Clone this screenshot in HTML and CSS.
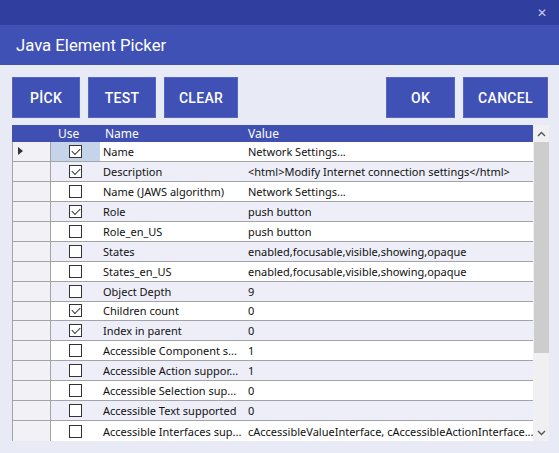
FILE: index.html
```html
<!DOCTYPE html>
<html>
<head>
<meta charset="utf-8">
<link rel="stylesheet" href="styles.css">
</head>
<body>
<div class="topbar">
  <span class="ghost">Device</span>
  <span class="close">&#x2715;</span>
</div>
<div class="titlebar">Java Element Picker</div>
<div class="toolbar">
  <button class="btn w68">PİCK</button>
  <button class="btn w68">TEST</button>
  <button class="btn w74">CLEAR</button>
  <div class="spacer"></div>
  <button class="btn w69">OK</button>
  <button class="btn w85">CANCEL</button>
</div>
<div class="gridwrap">
  <div class="grid">
    <div class="hrow">
      <div class="c-rh"></div>
      <div class="c-use hdr-use">Use</div>
      <div class="c-name">Name</div>
      <div class="c-val">Value</div>
    </div>
    <div class="row">
      <div class="c-rh"><span class="marker"></span></div>
      <div class="c-use sel"><span class="cb on"></span></div>
      <div class="c-name">Name</div>
      <div class="c-val">Network Settings...</div>
    </div>
    <div class="row alt">
      <div class="c-rh"></div>
      <div class="c-use"><span class="cb on"></span></div>
      <div class="c-name">Description</div>
      <div class="c-val">&lt;html&gt;Modify Internet connection settings&lt;/html&gt;</div>
    </div>
    <div class="row">
      <div class="c-rh"></div>
      <div class="c-use"><span class="cb"></span></div>
      <div class="c-name">Name (JAWS algorithm)</div>
      <div class="c-val">Network Settings...</div>
    </div>
    <div class="row alt">
      <div class="c-rh"></div>
      <div class="c-use"><span class="cb on"></span></div>
      <div class="c-name">Role</div>
      <div class="c-val">push button</div>
    </div>
    <div class="row">
      <div class="c-rh"></div>
      <div class="c-use"><span class="cb"></span></div>
      <div class="c-name">Role_en_US</div>
      <div class="c-val">push button</div>
    </div>
    <div class="row alt">
      <div class="c-rh"></div>
      <div class="c-use"><span class="cb"></span></div>
      <div class="c-name">States</div>
      <div class="c-val">enabled,focusable,visible,showing,opaque</div>
    </div>
    <div class="row">
      <div class="c-rh"></div>
      <div class="c-use"><span class="cb"></span></div>
      <div class="c-name">States_en_US</div>
      <div class="c-val">enabled,focusable,visible,showing,opaque</div>
    </div>
    <div class="row alt">
      <div class="c-rh"></div>
      <div class="c-use"><span class="cb"></span></div>
      <div class="c-name">Object Depth</div>
      <div class="c-val">9</div>
    </div>
    <div class="row">
      <div class="c-rh"></div>
      <div class="c-use"><span class="cb on"></span></div>
      <div class="c-name">Children count</div>
      <div class="c-val">0</div>
    </div>
    <div class="row alt">
      <div class="c-rh"></div>
      <div class="c-use"><span class="cb on"></span></div>
      <div class="c-name">Index in parent</div>
      <div class="c-val">0</div>
    </div>
    <div class="row">
      <div class="c-rh"></div>
      <div class="c-use"><span class="cb"></span></div>
      <div class="c-name">Accessible Component s...</div>
      <div class="c-val">1</div>
    </div>
    <div class="row alt">
      <div class="c-rh"></div>
      <div class="c-use"><span class="cb"></span></div>
      <div class="c-name">Accessible Action suppor...</div>
      <div class="c-val">1</div>
    </div>
    <div class="row">
      <div class="c-rh"></div>
      <div class="c-use"><span class="cb"></span></div>
      <div class="c-name">Accessible Selection sup...</div>
      <div class="c-val">0</div>
    </div>
    <div class="row alt">
      <div class="c-rh"></div>
      <div class="c-use"><span class="cb"></span></div>
      <div class="c-name">Accessible Text supported</div>
      <div class="c-val">0</div>
    </div>
    <div class="row last">
      <div class="c-rh"></div>
      <div class="c-use"><span class="cb"></span></div>
      <div class="c-name">Accessible Interfaces sup...</div>
      <div class="c-val">cAccessibleValueInterface, cAccessibleActionInterface...</div>
    </div>
  </div>
  <div class="sbar">
    <div class="sb-arrow">
      <svg width="9" height="6" viewBox="0 0 9 6"><path d="M1 5 L4.5 1.5 L8 5" fill="none" stroke="#555" stroke-width="1.4"/></svg>
    </div>
    <div class="sb-thumb"></div>
    <div class="sb-track"></div>
    <div class="sb-arrow">
      <svg width="9" height="6" viewBox="0 0 9 6"><path d="M1 1 L4.5 4.5 L8 1" fill="none" stroke="#555" stroke-width="1.4"/></svg>
    </div>
  </div>
</div>
</body>
</html>
```
FILE: styles.css
```css
html, body {
  margin: 0;
  padding: 0;
}
body {
  width: 559px;
  height: 453px;
  overflow: hidden;
  background: #e8eaf5;
  font-family: "Noto Sans", "DejaVu Sans", sans-serif;
}
.topbar {
  height: 25px;
  background: #303f9f;
  display: flex;
  justify-content: space-between;
  align-items: center;
  overflow: hidden;
}
.ghost {
  color: #c5cae9;
  font-family: Roboto, sans-serif;
  font-size: 15px;
  margin-top: -40px;
  padding-left: 2px;
}
.close {
  color: #c5cae9;
  font-size: 12px;
  font-weight: bold;
  padding-right: 12px;
  line-height: 1;
}
.titlebar {
  height: 40px;
  background: #3f51b5;
  color: #fff;
  font-family: Roboto, sans-serif;
  font-size: 16.7px;
  display: flex;
  align-items: center;
  padding-left: 16px;
}
.toolbar {
  display: flex;
  gap: 8px;
  padding: 12px 11px 0 12px;
  height: 41px;
  margin-bottom: 7px;
}
.spacer {
  flex: 1;
}
.btn {
  height: 41px;
  background: #3f51b5;
  border: 1px solid #5465c2;
  color: #fff;
  font-family: Roboto, sans-serif;
  font-weight: 500;
  font-size: 14px;
  letter-spacing: 0.3px;
  padding: 0;
  margin: 0;
}
.w68 { width: 68px; }
.w69 { width: 69px; }
.w74 { width: 74px; }
.w85 { width: 85px; }
.gridwrap {
  display: flex;
  margin-left: 12px;
  width: 537px;
  height: 316px;
  overflow: hidden;
}
.grid {
  width: 521px;
  display: flex;
  flex-direction: column;
  font-size: 11px;
  color: #111;
}
.hrow {
  height: 17px;
  display: flex;
  background: #3f4fb2;
  color: #fff;
  font-size: 12px;
  align-items: center;
}
.row {
  height: 20px;
  box-sizing: border-box;
  display: flex;
  border-bottom: 1px solid #a4a4a8;
  background: #fff;
}
.row.alt {
  background: #edeef8;
}
.row.last {
  border-bottom: none;
}
.c-rh {
  width: 39px;
  flex: none;
  box-sizing: border-box;
  display: flex;
  align-items: center;
}
.row .c-rh {
  background: #f2f2f6;
  border-left: 1px solid #a4a4a8;
  border-right: 1px solid #a4a4a8;
}
.c-use {
  width: 49px;
  flex: none;
  display: flex;
  align-items: center;
  justify-content: center;
}
.hdr-use {
  justify-content: flex-start;
  padding-left: 7px;
  box-sizing: border-box;
}
.c-name {
  width: 145px;
  flex: none;
  box-sizing: border-box;
  padding-left: 3px;
  display: flex;
  align-items: center;
  white-space: nowrap;
  overflow: hidden;
}
.hrow .c-name {
  padding-left: 5px;
}
.c-val {
  width: 288px;
  flex: none;
  box-sizing: border-box;
  padding-left: 3px;
  display: flex;
  align-items: center;
  white-space: nowrap;
  overflow: hidden;
}
.sel {
  background: #c6d4ea;
}
.marker {
  width: 0;
  height: 0;
  margin-left: 5px;
  border-top: 4px solid transparent;
  border-bottom: 4px solid transparent;
  border-left: 5px solid #333;
}
.cb {
  width: 13px;
  height: 13px;
  box-sizing: border-box;
  border: 1px solid #333;
  background: #fff;
  position: relative;
}
.cb.on::after {
  content: "";
  position: absolute;
  left: 2px;
  top: 0px;
  width: 7px;
  height: 4px;
  border-left: 1px solid #333;
  border-bottom: 1px solid #333;
  transform: translate(0, 2px) rotate(-45deg);
  transform-origin: center;
}
.sbar {
  width: 16px;
  display: flex;
  flex-direction: column;
  background: #f0f0f2;
}
.sb-arrow {
  height: 17px;
  display: flex;
  align-items: center;
  justify-content: center;
  flex: none;
}
.sb-thumb {
  height: 211px;
  flex: none;
  margin-left: 1px;
  background: #cdcdcd;
}
.sb-track {
  flex: 1;
}
```
